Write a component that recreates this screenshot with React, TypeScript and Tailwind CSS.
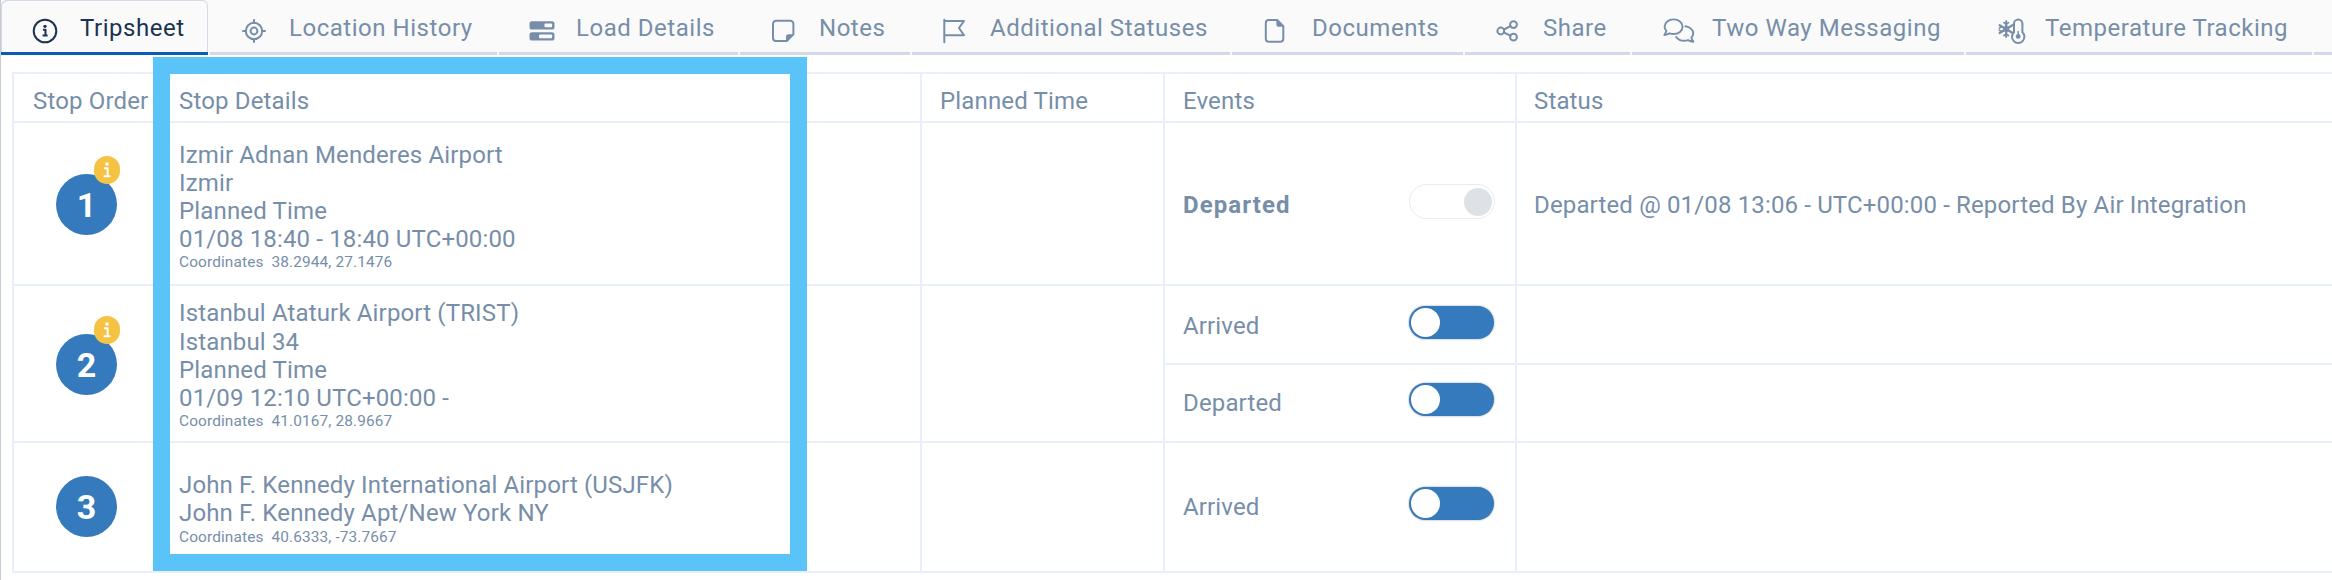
import type { ReactNode } from "react";
import clsx from "clsx";

const stroke = {
  fill: "none",
  stroke: "currentColor",
  strokeWidth: 2,
  strokeLinecap: "round" as const,
  strokeLinejoin: "round" as const,
};

function Icon({ children, width = 26 }: { children: ReactNode; width?: number }) {
  return (
    <svg width={width} height={26} viewBox={`0 0 ${width} 26`} className="shrink-0">
      {children}
    </svg>
  );
}

function InfoIcon() {
  return (
    <Icon>
      <circle cx="13" cy="13" r="11.3" {...stroke} />
      <circle cx="13" cy="8.3" r="1.6" fill="currentColor" />
      <path d="M11 11.8h2.5v5.6M10.6 17.6h5" {...stroke} strokeLinecap="butt" />
    </Icon>
  );
}

function LocationIcon() {
  return (
    <Icon>
      <circle cx="13" cy="13" r="8.2" {...stroke} />
      <circle cx="13" cy="13" r="3.4" {...stroke} />
      <path d="M13 2v3M13 21v3M2 13h3M21 13h3" {...stroke} />
    </Icon>
  );
}

function LoadIcon() {
  return (
    <Icon>
      <rect x="0.5" y="3.3" width="25" height="8.2" rx="2.6" fill="currentColor" />
      <rect x="0.5" y="14.3" width="25" height="8.2" rx="2.6" fill="currentColor" />
      <rect x="15.5" y="5.6" width="7.6" height="3.6" rx="1" fill="#fafafa" />
      <rect x="10" y="16.6" width="13.1" height="3.6" rx="1" fill="#fafafa" />
    </Icon>
  );
}

function NotesIcon() {
  return (
    <Icon>
      <path d="M6 2.8h14.4a3 3 0 0 1 3 3v10.4l-6.6 6.8H6a3 3 0 0 1-3-3V5.8a3 3 0 0 1 3-3z" {...stroke} />
      <path d="M16 23.4v-4.8a2.4 2.4 0 0 1 2.4-2.4h5z" fill="currentColor" />
    </Icon>
  );
}

function FlagIcon() {
  return (
    <Icon>
      <path d="M2.3 1.8v22.4M2.3 3H22l-5 7 5 7.2H2.3" {...stroke} />
    </Icon>
  );
}

function DocumentIcon() {
  return (
    <Icon>
      <path d="M7.8 2h8.4l6.1 6.2v12.6a3 3 0 0 1-3 3H7.8a3 3 0 0 1-3-3V5a3 3 0 0 1 3-3z" {...stroke} />
      <path d="M15.4 2v4.8a2 2 0 0 0 2 2h5.2z" fill="currentColor" />
    </Icon>
  );
}

function ShareIcon() {
  return (
    <Icon>
      <circle cx="5.8" cy="13" r="3.4" {...stroke} />
      <circle cx="18.5" cy="6.6" r="3.4" {...stroke} />
      <circle cx="18.5" cy="19.2" r="3.4" {...stroke} />
      <path d="M8.9 11.5l6.5-3.3M8.9 14.5l6.5 3.2" {...stroke} />
    </Icon>
  );
}

function MessagesIcon() {
  return (
    <Icon width={34}>
      <path
        d="M4.4 12.8C3.2 11.6 2.6 10.2 2.6 8.7c0-4.1 4-7.3 9-7.3s9 3.2 9 7.3-4 7.3-9 7.3c-1.4 0-2.7-.2-3.9-.7-1.5 1-3.2 1.6-5.4 1.7 1.2-1.4 1.8-2.8 2.1-4.2z"
        {...stroke}
        strokeWidth="1.9"
      />
      <path
        d="M23.4 8.2c4.4.7 7.8 3.6 7.8 7.3 0 1.6-.7 3-1.8 4.2.3 1.4 1 2.7 2 4-2.2 0-3.9-.7-5.3-1.6-1.2.4-2.5.6-3.9.6-3.5 0-6.5-1.5-8-3.8"
        {...stroke}
        strokeWidth="1.9"
      />
    </Icon>
  );
}

function TemperatureIcon() {
  return (
    <Icon width={28}>
      <path d="M8.2 3.4v15.4M1.6 7.2l13.2 7.8M14.4 7.2L1.6 15" {...stroke} strokeWidth="2.2" />
      <circle cx="8.2" cy="11.1" r="3" fill="currentColor" />
      <path d="M5.8 4.6l2.4 1.8 2.4-1.8M5.8 17.6l2.4-1.8 2.4 1.8M1.2 10.2l2.6-1.4M1.2 12l2.6 1.6" {...stroke} strokeWidth="1.5" />
      <path d="M16 5.6a4.2 4.2 0 0 1 8.4 0v8.6a6.2 6.2 0 1 1-8.4 0z" {...stroke} fill="#fafafa" />
      <circle cx="20.2" cy="18.4" r="2.4" fill="currentColor" />
      <path d="M20.2 13.5v4" {...stroke} strokeWidth="1.5" />
    </Icon>
  );
}

const tabs = [
  { label: "Tripsheet", icon: <InfoIcon />, width: "w-[207px]", lead: "w-[79px] pl-[31px]", active: true },
  { label: "Location History", icon: <LocationIcon />, width: "w-[287px]", lead: "w-[79px] pl-[31px]" },
  { label: "Load Details", icon: <LoadIcon />, width: "w-[239px]", lead: "w-[77px] pl-[30px]" },
  { label: "Notes", icon: <NotesIcon />, width: "w-[170px]", lead: "w-[79px] pl-[30px]" },
  { label: "Additional Statuses", icon: <FlagIcon />, width: "w-[318px]", lead: "w-[78px] pl-[30px]" },
  { label: "Documents", icon: <DocumentIcon />, width: "w-[231px]", lead: "w-[80px] pl-[29px]" },
  { label: "Share", icon: <ShareIcon />, width: "w-[165px]", lead: "w-[78px] pl-[30px]" },
  { label: "Two Way Messaging", icon: <MessagesIcon />, width: "w-[332px]", lead: "w-[80px] pl-[30px]" },
  { label: "Temperature Tracking", icon: <TemperatureIcon />, width: "w-[346px]", lead: "w-[79px] pl-[32px]" },
];

function TabBar() {
  return (
    <nav className="flex h-[55px] gap-[2px] overflow-hidden bg-[#fafafa] tracking-[0.53px]">
      {tabs.map((tab) => (
        <div
          key={tab.label}
          className={clsx(
            "flex h-full shrink-0 border-b-[3px] pt-[11px]",
            tab.width,
            tab.active
              ? "rounded-t-[6px] border-b-[#0b5cb3] text-[#1b3350] shadow-[inset_1px_1px_0_#d5dbe6,inset_-1px_0_0_#d5dbe6]"
              : "border-[#d3d9e8]",
          )}
        >
          <span className={clsx("flex h-[39px] shrink-0 items-center", tab.lead)}>{tab.icon}</span>
          <span className="mt-[3px] whitespace-nowrap">{tab.label}</span>
        </div>
      ))}
      <div className="h-full grow border-b-[3px] border-[#d3d9e8]" />
    </nav>
  );
}

function StopNumber({ value, info }: { value: number; info?: boolean }) {
  return (
    <div className="relative flex h-[61px] w-[61px] items-center justify-center rounded-full bg-[#357abd] text-[34px] font-bold tracking-normal text-white">
      {value}
      {info && (
        <span className="absolute -top-[18px] left-[38px] flex h-[28px] w-[26px] items-center justify-center rounded-full bg-[#f5c242]">
          <svg width="8" height="16" viewBox="0 0 8 16">
            <circle cx="4" cy="2" r="1.8" fill="#fff" />
            <path d="M1 6.2h3.6v7.6M0.6 14.2h6.8" fill="none" stroke="#fff" strokeWidth="2" />
          </svg>
        </span>
      )}
    </div>
  );
}

function Toggle({ done }: { done?: boolean }) {
  if (done) {
    return (
      <span className="flex h-[35px] w-[86px] items-center justify-end rounded-full border-[1.5px] border-[#e9ecef] pr-[2px]">
        <span className="h-[28px] w-[28px] rounded-full bg-[#dee2e6]" />
      </span>
    );
  }
  return (
    <span className="flex h-[33px] w-[85px] items-center rounded-full bg-[#357abd] pl-[1.5px] shadow-[0_0_2px_rgba(40,50,70,0.55)]">
      <span className="h-[29.5px] w-[29.5px] rounded-full bg-white" />
    </span>
  );
}

function Cell({ className, last, children }: { className?: string; last?: boolean; children?: ReactNode }) {
  return <div className={clsx("border-b-2 border-[#e8eefb]", !last && "border-r-2", className)}>{children}</div>;
}

function EventCell({ label, done, className }: { label: string; done?: boolean; className?: string }) {
  return (
    <Cell className={clsx("flex items-start justify-between pr-[21px] pl-[18px]", className)}>
      <span className={clsx(done && "font-bold tracking-[1.1px]")}>{label}</span>
      <span className={done ? "-mt-[7px] -mr-px" : "-mt-[6px]"}>
        <Toggle done={done} />
      </span>
    </Cell>
  );
}

type Stop = {
  lines: string[];
  coordinates: string;
  info?: boolean;
  row?: string;
  numberPad: string;
  detailsPad: string;
  events: { label: string; done?: boolean; status?: string; pad: string }[];
};

const stops: Stop[] = [
  {
    lines: ["Izmir Adnan Menderes Airport", "Izmir", "Planned Time", "01/08 18:40 - 18:40 UTC+00:00"],
    coordinates: "38.2944, 27.1476",
    info: true,
    numberPad: "pt-[51px]",
    detailsPad: "pt-[18px]",
    events: [
      {
        label: "Departed",
        done: true,
        status: "Departed @ 01/08 13:06 - UTC+00:00 - Reported By Air Integration",
        pad: "pt-[68px]",
      },
    ],
  },
  {
    lines: ["Istanbul Ataturk Airport (TRIST)", "Istanbul 34", "Planned Time", "01/09 12:10 UTC+00:00 -"],
    coordinates: "41.0167, 28.9667",
    info: true,
    row: "row-span-2",
    numberPad: "pt-[48px]",
    detailsPad: "pt-[13px] *:first:mb-px",
    events: [
      { label: "Arrived", pad: "pt-[26px]" },
      { label: "Departed", pad: "pt-[24px]" },
    ],
  },
  {
    lines: ["John F. Kennedy International Airport (USJFK)", "John F. Kennedy Apt/New York NY"],
    coordinates: "40.6333, -73.7667",
    numberPad: "pt-[33px]",
    detailsPad: "pt-[28px] *:last:mt-px",
    events: [{ label: "Arrived", pad: "pt-[50px]" }],
  },
];

function StopRows({ stop, index }: { stop: Stop; index: number }) {
  return (
    <>
      <Cell className={clsx("pl-[42px]", stop.row, stop.numberPad)}>
        <StopNumber value={index + 1} info={stop.info} />
      </Cell>
      <Cell className={clsx("pl-[13px]", stop.row, stop.detailsPad)}>
        {stop.lines.map((line) => (
          <div key={line}>{line}</div>
        ))}
        <div className="text-[15.4px] leading-[19px] tracking-[0.13px] whitespace-pre">
          {"Coordinates  "}
          {stop.coordinates}
        </div>
      </Cell>
      <Cell className={stop.row} />
      {stop.events.map((event) => (
        <div key={event.label} className="col-span-2 grid grid-cols-subgrid">
          <EventCell label={event.label} done={event.done} className={event.pad} />
          <Cell last className={clsx("pl-[17px]", event.pad)}>
            {event.status}
          </Cell>
        </div>
      ))}
    </>
  );
}

function StopTable() {
  return (
    <div className="mt-[17px] ml-[11px] grid grid-cols-[152px_756px_243px_352px_1fr] grid-rows-[49px_163px_79px_78px_130px] border-t-2 border-l-2 border-[#e8eefb]">
      <Cell className="pt-[13px] pl-[19px]">Stop Order</Cell>
      <Cell className="pt-[13px] pl-[13px]">Stop Details</Cell>
      <Cell className="pt-[13px] pl-[18px]">Planned Time</Cell>
      <Cell className="pt-[13px] pl-[18px]">Events</Cell>
      <Cell last className="pt-[13px] pl-[17px]">
        Status
      </Cell>
      {stops.map((stop, index) => (
        <StopRows key={stop.coordinates} stop={stop} index={index} />
      ))}
    </div>
  );
}

export default function App() {
  return (
    <div className="relative h-[580px] w-[2332px] overflow-hidden border-l border-[#c9cbce] bg-white font-['Roboto',sans-serif] text-[24px] leading-[28px] tracking-[0.15px] text-[#778ea9]">
      <TabBar />
      <StopTable />
      {/* Highlight frame over the stop details column */}
      <div className="pointer-events-none absolute top-[57px] left-[152px] h-[514px] w-[654px] border-[17px] border-[#5ac4f9]" />
    </div>
  );
}
